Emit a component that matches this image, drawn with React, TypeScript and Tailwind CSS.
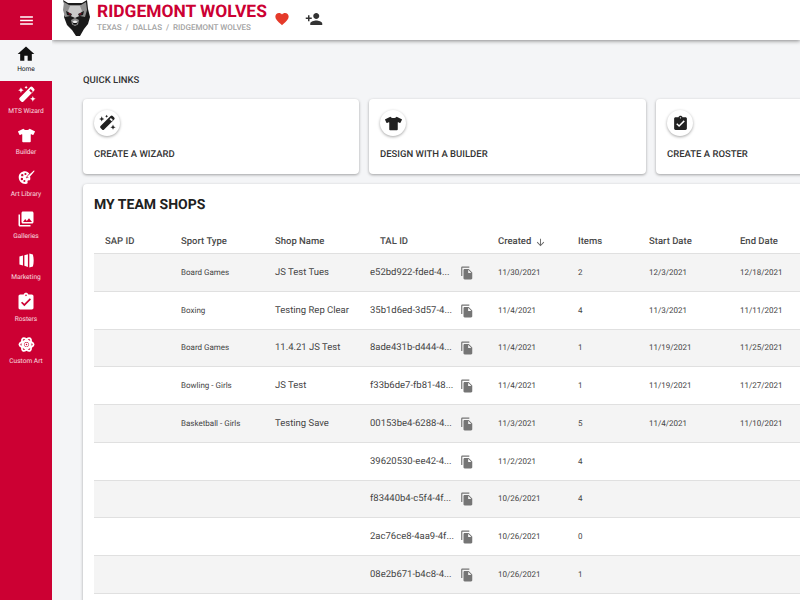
import React from "react";
import { FaTshirt } from "react-icons/fa";
import {
  MdArrowDownward,
  MdAssignmentTurnedIn,
  MdFavorite,
  MdFileCopy,
  MdHome,
  MdMenu,
  MdPersonAdd,
  MdPhotoLibrary,
} from "react-icons/md";

function WandIcon({ className }: { className?: string }) {
  return (
    <svg viewBox="0 0 24 24" className={className} fill="currentColor">
      <path d="M16.800 2.600a2 2 0 012.800 0l2 2a2 2 0 010 2.800L8.200 20.800a2 2 0 01-2.800 0l-2-2a2 2 0 010-2.800zM15.400 7l2.800 2.800 1.800-1.800L17.200 5.200z" fillRule="evenodd" />
      <path d="M5 3l1 2.500L8.500 6.500 6 7.500 5 10 4 7.500 1.500 6.500 4 5.500zM11.500 1l.7 1.300 1.300.7-1.300.7-.7 1.300-.7-1.300L9.500 3l1.300-.7zM20 14l1 2.500 2.500 1-2.500 1-1 2.500-1-2.500-2.500-1 2.500-1z" />
    </svg>
  );
}

function PaletteIcon({ className }: { className?: string }) {
  return (
    <svg viewBox="0 0 24 24" className={className} fill="currentColor">
      <path
        fillRule="evenodd"
        d="M10 3C5 3 1 6.500 1 11.500S5 21 10.500 21c2.500 0 3.500-1.200 3-2.800-.4-1.400.3-2.400 1.700-2.400H17c.7-2 .5-4-.3-5.800L12.500 14.500 11 12l5-5.500C14.500 4.300 12.500 3 10 3zM6 7a1.700 1.700 0 110 3.400A1.700 1.700 0 016 7zm4.500-1.500a1.500 1.500 0 110 3 1.500 1.500 0 010-3zM5.500 12.500a1.700 1.700 0 110 3.400 1.700 1.700 0 010-3.400zm3.500 3a1.500 1.500 0 110 3 1.500 1.500 0 010-3z"
      />
      <path d="M22 2.500c.8-.6 1.600.2 1 1l-7.500 9-2.500-1.800zM12.500 11.500l2.300 1.700c-.4 1.700-2 2.500-4.300 2.300 1-1 1-3 2-4z" />
    </svg>
  );
}

function MarketingIcon({ className }: { className?: string }) {
  return (
    <svg viewBox="0 0 24 24" className={className} fill="currentColor">
      <path d="M2 6.500L7 5v14l-5-1.500zM9 4.500L14 3v18l-5-1.500zM16 2l5 1.500c1.500 5 1.500 12 0 17L16 22z" />
    </svg>
  );
}

function AtomIcon({ className }: { className?: string }) {
  return (
    <svg viewBox="0 0 24 24" className={className} fill="none" stroke="currentColor" strokeWidth="2.600">
      <ellipse cx="12" cy="12" rx="10" ry="4.800" />
      <ellipse cx="12" cy="12" rx="10" ry="4.800" transform="rotate(60 12 12)" />
      <ellipse cx="12" cy="12" rx="10" ry="4.800" transform="rotate(120 12 12)" />
      <circle cx="12" cy="12" r="2" strokeWidth="2" />
    </svg>
  );
}

function WolfLogo() {
  return (
    <svg viewBox="0 0 30 36" className="h-[36px] w-[30px]">
      <path d="M3 0l5 3h14l5-3 1 9 2 8-2 7-4 5-4 7-2 1-2-1-4-6-5-5-3-8 2-7z" fill="#1a1a1a" />
      <path d="M4 2l5 3h12l5-3 1 8-2 7-5-1-5 1-5-1-5 1-2-7z" fill="#8f8f8f" />
      <path d="M10 6h10l2 5-3 5-4 2-4-2-3-5z" fill="#c9c9c9" />
      <path d="M6 11l6 3-1 2-4-1zM24 11l-6 3 1 2 4-1z" fill="#1a1a1a" />
      <path d="M8 12.800l2.800 1.300-.8 1zM22 12.800l-2.800 1.300.8 1z" fill="#b01030" />
      <path d="M11 20l4-2 4 2-1 4.500-3 1.500-3-1.500z" fill="#8c8c8c" />
      <path d="M12.500 22h5l-1 2.500h-3z" fill="#0d0d0d" />
      <path d="M12.500 21.500l1 1.500h3l1-1.500-2.500-1z" fill="#eeeeee" />
    </svg>
  );
}

const navItems = [
  { label: "MTS Wizard", Icon: WandIcon, size: "h-[19px] w-[19px]" },
  { label: "Builder", Icon: FaTshirt, size: "h-[17px] w-[17px]" },
  { label: "Art Library", Icon: PaletteIcon, size: "h-[17px] w-[17px]" },
  { label: "Galleries", Icon: MdPhotoLibrary, size: "h-[18px] w-[18px]" },
  { label: "Marketing", Icon: MarketingIcon, size: "h-[17px] w-[17px]" },
  { label: "Rosters", Icon: MdAssignmentTurnedIn, size: "h-[20px] w-[20px]" },
  { label: "Custom Art", Icon: AtomIcon, size: "h-[17px] w-[17px]" },
];

const quickLinks = [
  { label: "CREATE A WIZARD", Icon: WandIcon, width: "w-[276px]", iconSize: "h-[18px] w-[18px]" },
  { label: "DESIGN WITH A BUILDER", Icon: FaTshirt, width: "w-[277px]", iconSize: "h-[17px] w-[17px]" },
  { label: "CREATE A ROSTER", Icon: MdAssignmentTurnedIn, width: "w-[276px]", iconSize: "h-[17px] w-[17px]" },
];

const rows = [
  ["Board Games", "JS Test Tues", "e52bd922-fded-4...", "11/30/2021", "2", "12/3/2021", "12/18/2021"],
  ["Boxing", "Testing Rep Clear", "35b1d6ed-3d57-4...", "11/4/2021", "4", "11/3/2021", "11/11/2021"],
  ["Board Games", "11.4.21 JS Test", "8ade431b-d444-4...", "11/4/2021", "1", "11/19/2021", "11/25/2021"],
  ["Bowling - Girls", "JS Test", "f33b6de7-fb81-48...", "11/4/2021", "1", "11/19/2021", "11/27/2021"],
  ["Basketball - Girls", "Testing Save", "00153be4-6288-4...", "11/3/2021", "5", "11/4/2021", "11/10/2021"],
  ["", "", "39620530-ee42-4...", "11/2/2021", "4", "", ""],
  ["", "", "f83440b4-c5f4-4f...", "10/26/2021", "4", "", ""],
  ["", "", "2ac76ce8-4aa9-4f...", "10/26/2021", "0", "", ""],
  ["", "", "08e2b671-b4c8-4...", "10/26/2021", "1", "", ""],
];

const gridCols = "grid grid-cols-[87px_94px_95px_128px_80px_71px_91px_80px]";

export default function App() {
  return (
    <div className="flex h-screen w-screen overflow-hidden bg-[#f4f5f7] font-['Roboto',sans-serif] text-[#212121] [text-rendering:geometricPrecision]">
      <aside className="z-20 w-[52px] shrink-0 bg-[#cc0033] text-white">
        <div className="flex h-10 items-center justify-center">
          <MdMenu className="text-[17px]" />
        </div>
        <div className="flex h-[41px] flex-col items-center bg-[#f4f5f7] pt-[4px] text-[#111]">
          <div className="flex h-[20px] items-center">
            <MdHome className="text-[20px]" />
          </div>
          <span className="text-[6.600px] leading-[10px]">Home</span>
        </div>
        {navItems.map(({ label, Icon, size }) => (
          <div key={label} className="flex h-[41.700px] flex-col items-center pt-[3px]">
            <div className="flex h-[20px] items-center justify-center">
              <Icon className={size} />
            </div>
            <span className="mt-[1.500px] whitespace-nowrap text-[6.600px] leading-[10px] text-white/85">{label}</span>
          </div>
        ))}
      </aside>

      <div className="flex min-w-0 flex-1 flex-col">
        <header className="z-10 flex h-10 shrink-0 items-start bg-white shadow-[0_1px_4px_rgba(0,0,0,0.45)]">
          <div className="ml-2 mr-[7px]">
            <WolfLogo />
          </div>
          <div className="flex flex-col pt-[2px]">
            <span className="text-[17.400px] font-bold leading-[21px] text-[#cc0033]">RIDGEMONT WOLVES</span>
            <span className="text-[8px] font-medium leading-[9px] text-[#a3a3a3]">
              TEXAS&nbsp;&nbsp;/&nbsp;&nbsp;DALLAS&nbsp;&nbsp;/&nbsp;&nbsp;RIDGEMONT WOLVES
            </span>
          </div>
          <MdFavorite className="ml-[7px] mt-[11px] text-[16px] text-[#e53a2a]" />
          <MdPersonAdd className="ml-[15px] mt-[10px] text-[18px] text-[#333]" />
        </header>

        <main className="flex min-h-0 flex-1 flex-col overflow-hidden pl-[31px] pt-[33px]">
          <h2 className="pt-[2px] text-[9.500px] font-medium leading-3 text-[#333]">QUICK LINKS</h2>
          <div className="mt-[12px] flex gap-[10px]">
            {quickLinks.map(({ label, Icon, width, iconSize }) => (
              <div
                key={label}
                className={`${width} flex h-[75px] shrink-0 flex-col rounded bg-white px-[11px] pt-[11px] shadow-[0_1px_3px_rgba(0,0,0,0.35)]`}
              >
                <div className="flex h-[26px] w-[26px] items-center justify-center rounded-full bg-white text-[#212121] shadow-[0_1px_3px_rgba(0,0,0,0.35)]">
                  <Icon className={iconSize} />
                </div>
                <span className="mt-[13px] text-[9.500px] font-medium leading-[12px] text-[#333]">{label}</span>
              </div>
            ))}
          </div>

          <section className="mt-[10px] w-[760px] shrink-0 rounded bg-white px-[11px] pb-10 pt-[12px] shadow-[0_1px_3px_rgba(0,0,0,0.35)]">
            <h1 className="text-[14px] font-bold leading-[18px] text-[#212121]">MY TEAM SHOPS</h1>
            <div className={`${gridCols} mt-[16px] h-[24px] items-center border-b border-[#e0e0e0] pt-[1px] text-[9.500px] font-medium text-[#4a4a4a]`}>
              <span className="pl-[11px]">SAP ID</span>
              <span>Sport Type</span>
              <span>Shop Name</span>
              <span className="pl-[10px]">TAL ID</span>
              <span className="flex items-center gap-[4px]">
                Created <MdArrowDownward className="text-[11px] text-[#666]" />
              </span>
              <span>Items</span>
              <span>Start Date</span>
              <span>End Date</span>
            </div>
            {rows.map((row, i) => (
              <div
                key={row[2]}
                className={`${gridCols} h-[37.750px] items-center border-b border-[#e0e0e0] pt-[1px] ${i % 2 === 0 ? "bg-[#f4f4f4]" : "bg-white"}`}
              >
                <span />
                <span className="text-[8px] text-[#444]">{row[0]}</span>
                <span className="text-[9.500px] text-[#444]">{row[1]}</span>
                <span className="flex items-center text-[9.500px] text-[#444]">
                  <span className="w-[90px] whitespace-nowrap">{row[2]}</span>
                  <MdFileCopy className="text-[14px] text-[#757575]" />
                </span>
                <span className="text-[8px] text-[#444]">{row[3]}</span>
                <span className="text-[8px] text-[#444]">{row[4]}</span>
                <span className="text-[8px] text-[#444]">{row[5]}</span>
                <span className="text-[8px] text-[#444]">{row[6]}</span>
              </div>
            ))}
          </section>
        </main>
      </div>
    </div>
  );
}
